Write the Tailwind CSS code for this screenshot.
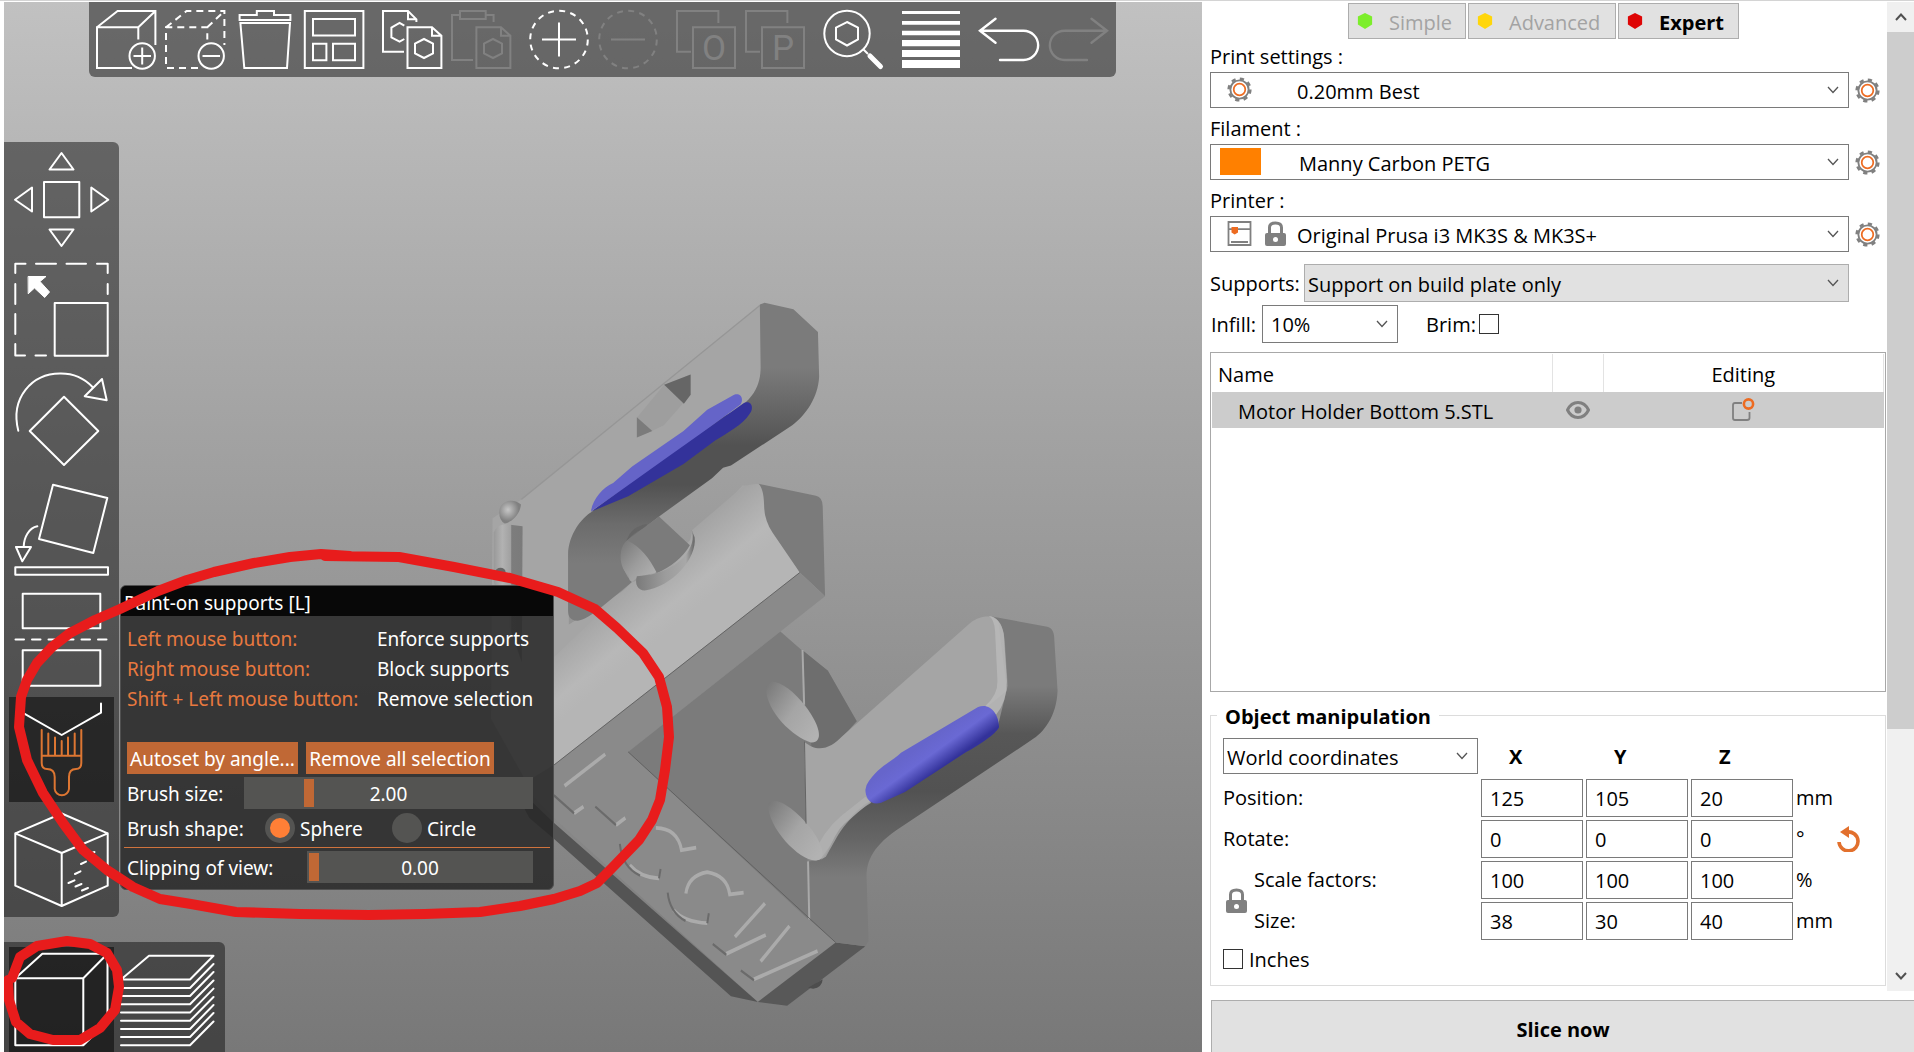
<!DOCTYPE html>
<html lang="en">
<head>
<meta charset="utf-8">
<title>PrusaSlicer</title>
<script src="https://cdn.jsdelivr.net/npm/@tailwindcss/browser@4"></script>
</head>
<body class="bg-white text-black">
<div class="flex h-screen flex-col overflow-hidden border-t border-[#d4d4d4] bg-white pt-px font-['Open_Sans','Noto_Sans',sans-serif] text-[20px] leading-7">
<div class="flex min-h-0 flex-1">

<main class="relative ml-[3px] min-w-0 flex-1 overflow-hidden border-l border-white bg-linear-to-b from-[#c1c1c1] to-[#787878] font-['Noto_Sans',sans-serif] text-white">

  <!-- 3D scene -->
  <svg class="absolute inset-0 h-full w-full" viewBox="4 2 1198 1050" preserveAspectRatio="xMinYMin slice" aria-label="Motor Holder Bottom model">
    <defs>
      <linearGradient id="armA" gradientUnits="userSpaceOnUse" x1="0" y1="185" x2="0" y2="600"><stop offset="0" stop-color="#7b7b7b"/><stop offset=".28" stop-color="#5f5f5f"/><stop offset=".4" stop-color="#525252"/><stop offset=".6" stop-color="#525252"/><stop offset=".8" stop-color="#6c6c6c"/><stop offset="1" stop-color="#7b7b7b"/></linearGradient>
      <linearGradient id="armB" gradientUnits="userSpaceOnUse" x1="0" y1="860" x2="0" y2="1265"><stop offset="0" stop-color="#7b7b7b"/><stop offset=".25" stop-color="#575757"/><stop offset=".55" stop-color="#525252"/><stop offset=".8" stop-color="#656565"/><stop offset="1" stop-color="#7b7b7b"/></linearGradient>
      <linearGradient id="block" gradientUnits="userSpaceOnUse" x1="420" y1="630" x2="500" y2="745"><stop offset="0" stop-color="#a4a4a4"/><stop offset=".7" stop-color="#b8b8b8"/><stop offset="1" stop-color="#b5b5b5"/></linearGradient>
      <linearGradient id="hole" x1="0" y1="0" x2="1" y2=".8"><stop offset="0" stop-color="#777"/><stop offset=".55" stop-color="#a5a5a5"/><stop offset="1" stop-color="#b2b2b2"/></linearGradient>
      <linearGradient id="hole2" x1="0" y1="0" x2="1" y2="1"><stop offset="0" stop-color="#777"/><stop offset=".5" stop-color="#9c9c9c"/><stop offset="1" stop-color="#b6b6b6"/></linearGradient>
      <linearGradient id="lip" x1="0" y1="0" x2="1" y2="0"><stop offset="0" stop-color="#7a7a7a"/><stop offset=".5" stop-color="#9c9c9c"/><stop offset=".85" stop-color="#a8a8a8"/><stop offset="1" stop-color="#666"/></linearGradient>
      <linearGradient id="paint" gradientUnits="userSpaceOnUse" x1="1150" y1="980" x2="1185" y2="1038"><stop offset="0" stop-color="#6665cb"/><stop offset=".45" stop-color="#6a69d4"/><stop offset="1" stop-color="#33329a"/></linearGradient>
      <linearGradient id="tube"><stop offset="0" stop-color="#999"/><stop offset=".3" stop-color="#b2b2b2"/><stop offset=".6" stop-color="#a0a0a0"/><stop offset=".62" stop-color="#7d7d7d"/><stop offset="1" stop-color="#7b7b7b"/></linearGradient>
      <radialGradient id="ball" cx=".4" cy=".4"><stop offset="0" stop-color="#c6c6c6"/><stop offset="1" stop-color="#808080"/></radialGradient>
    </defs>
    <g transform="translate(470 280) scale(.3954 .4719)">
      <path fill="#a5a5a5" d="M733 52 L740 190 L690 265 L310 492 L250 600 L250 730 L500 600 L690 435 L743 440 L834 620 L212 1028 L160 1090 L53 930 L57 505 L130 465Z"/>
      <path stroke="#969696" stroke-width="3" fill="none" d="M130 465 L733 54"/>
      <path fill="url(#armA)" d="M733 52 L745 48 L818 62 L880 110 L883 205 C880 250 850 285 815 308 L660 393 L640 398 L612 420 L480 500 L400 552 C378 568 376 610 410 640 L330 695 C300 715 280 722 272 722 C252 722 248 712 248 700 L248 580 C250 540 280 505 310 490 L640 290 C720 260 735 220 735 185Z"/>
      <path fill="url(#block)" d="M562 530 L690 438 Q715 430 735 433 L743 450 L745 495 L834 620 L212 1028 L212 800 L410 640 L500 620 L555 562Z"/>
      <path fill="#666" d="M396 552 Q408 522 447 517 L447 524 Q420 530 398 552Z"/>
      <path fill="#7b7b7b" d="M396 552 L478 501 L556 562 Q530 600 470 622 L440 590Z"/>
      <path fill="url(#hole2)" d="M398 552 C374 565 376 610 400 624 L404 636 L410 640 L425 629 L472 620 C455 590 430 565 398 552Z"/>
      <path fill="url(#lip)" d="M560 528 C568 545 562 568 540 588 C510 612 475 625 422 628 C416 645 424 658 442 658 C510 650 575 590 568 545Z"/>
      <path fill="#7b7b7b" d="M730 432 L875 457 Q892 460 892 480 L898 670 L834 620 L765 535 Q745 510 744 480 C743 450 738 440 730 432Z"/>
      <path fill="#8a8a8a" d="M834 620 L898 670 L785 745 L400 1000 L925 1404 L728 1530 L212 1140 L130 1070 L212 1028Z"/>
      <path fill="#545454" d="M100 1060 L212 1150 L728 1530 L660 1518 L212 1184 L150 1140Z"/>
      <path fill="#7b7b7b" d="M785 745 L840 785 L905 828 L978 935 L925 975 L845 1000 L858 1357 L400 1000Z"/>
      <path fill="#6e6e6e" d="M842 785 L905 828 L978 935 L925 985 Q890 1000 865 995 L848 900Z"/>
      <path fill="#585858" d="M925 1404 L1000 1412 L802 1538 L728 1530Z"/>
      <path fill="#4d4d4d" d="M855 1500 L892 1482 Q890 1500 868 1502Z"/>
      <path fill="#a5a5a5" d="M845 978 C880 1005 915 990 940 968 L1265 727 C1290 710 1315 712 1335 716 L1358 870 L1300 910 L1010 1105 C940 1140 900 1225 880 1230 L850 1150Z"/>
      <path fill="url(#armB)" d="M1320 713 L1460 735 C1475 738 1478 750 1478 765 L1486 870 C1484 925 1450 960 1420 975 L1080 1165 C1010 1205 1003 1240 1003 1265 L1008 1400 L1000 1412 L925 1404 L858 1355 L856 1232 L890 1228 C915 1205 920 1165 960 1143 L1010 1108 L1335 945 L1360 860 L1352 760 Q1345 720 1320 713Z"/>
      <path fill="#bababa" d="M1312 712 Q1342 715 1350 750 L1358 850 Q1358 895 1330 922 L1303 903 Q1335 880 1334 850 L1328 745 Q1326 718 1312 712Z" opacity=".8"/>
      <path fill="#b4b4b4" opacity=".7" d="M1000 1095 L1015 1108 C940 1145 925 1190 900 1222 Q885 1232 868 1222 Q890 1170 940 1135Z"/>
      <path fill="url(#hole)" d="M749 862 C756 838 805 855 850 905 C890 950 892 982 862 980 C820 970 746 915 749 862Z"/>
      <path fill="url(#hole)" d="M754 1110 C768 1090 820 1118 860 1160 C895 1198 900 1226 880 1229 C845 1240 752 1165 754 1110Z"/>
      <path fill="none" stroke="#a9a9a9" stroke-width="5" d="M841 784 L845 900 M855 1232 L858 1355"/>
      <path fill="none" stroke="#5c5c5c" stroke-width="2" d="M846 978 L850 1152 M400 1000 L925 1404 M212 1028 L834 620"/>
      <path fill="#9e9e9e" d="M422 292 L491 222 L558 200 L558 243 L490 308 L460 320 L422 333Z"/>
      <path fill="#666" d="M491 222 L558 200 L558 243 L541 262Z"/>
      <path fill="#7b7b7b" d="M422 291 L461 320 L422 334Z"/>
      <path fill="#6564c8" d="M306 490 C310 465 335 440 362 430 L410 395 L540 320 L600 275 L668 243 C688 238 692 255 684 264 L500 380Z"/>
      <path fill="#33329a" d="M306 491 L500 375 L690 262 C712 252 720 272 706 285 C692 305 650 325 620 340 L540 390 L400 458Z"/>
      <path fill="url(#paint)" d="M1003 1070 C1030 1030 1070 1020 1090 1002 L1285 905 C1315 895 1338 920 1338 948 C1330 962 1290 985 1250 1003 L1100 1085 L1040 1108 C1010 1115 1000 1095 1000 1080Z"/>
      <path fill="url(#tube)" d="M60 535 Q70 516 95 518 L133 522 L131 810 L60 640Z"/>
      <ellipse cx="77" cy="618" rx="13" ry="8" fill="#666"/>
      <path fill="url(#ball)" d="M74 492 C74 468 110 460 129 476 C126 500 100 515 88 516 Q74 510 74 492Z"/>
      <g fill="none" stroke-width="8">
        <path stroke="#ababab" d="M239 1072 L342 1005 M263 1130 L287 1116 M369 1155 L393 1140 M470 1161 Q525 1162 535 1208 L572 1203 M478 1268 Q430 1266 404 1240 M546 1300 Q552 1262 600 1255 Q650 1262 657 1302 L692 1298 M670 1392 L746 1321 M648 1428 L748 1388 M735 1444 L808 1369 M718 1482 L879 1422 M600 1363 Q540 1360 515 1335"/>
        <path stroke="#6b6b6b" stroke-width="5" d="M212 1092 L263 1130 M317 1116 L369 1155 M379 1195 Q385 1245 430 1262 M500 1298 Q505 1340 545 1358 M600 1363 L604 1342 M478 1268 L482 1248 M614 1407 L648 1430 M685 1463 L718 1484"/>
      </g>
    </g>
  </svg>

  <!-- top toolbar -->
  <nav aria-label="Main toolbar" class="absolute top-0 left-[85px] flex h-[75px] gap-[9px] rounded-b-md bg-[#141414]/51 px-2 pt-2">
    <button aria-label="Add" class="size-[60px]"><svg class="size-full overflow-visible" viewBox="98 10 60 60" fill="none" stroke="#fff" stroke-width="2"><path d="M133 68H98V27.3H139.3V39.5M98 27.3L118.6 11H156.4V45M139.3 27.3L156.4 11"/><circle cx="143.2" cy="56" r="12.7"/><path d="M134.5 56H152M143.2 47.5V64.5"/></svg></button>
    <button aria-label="Delete" class="size-[60px]"><svg class="size-full overflow-visible" viewBox="98 10 60 60" fill="none" stroke="#fff" stroke-width="2"><path stroke-dasharray="7 5" d="M130 68H98V27.3H139.3V39.5M98 27.3L118.6 11H156.4V45M139.3 27.3L156.4 11"/><circle cx="143.2" cy="56" r="12.7"/><path d="M134.5 56H152"/></svg></button>
    <button aria-label="Delete all" class="size-[60px]"><svg class="size-full overflow-visible" viewBox="235 10 60 60" fill="none" stroke="#fff" stroke-width="2"><path d="M239.6 20V15H256.8V11H274V15H290.4V20ZM240.4 23H290L287 68H244.3Z"/></svg></button>
    <button aria-label="Arrange" class="size-[60px]"><svg class="size-full overflow-visible" viewBox="304 10 60 60" fill="none" stroke="#fff" stroke-width="2"><path d="M304.8 11H363.4V68H304.8ZM313 19H355V35.5H313ZM313 43.7H326.4V60.3H313ZM333 43.7H355V60.3H333Z"/></svg></button>
    <button aria-label="Copy" class="ml-[9px] size-[60px]"><svg class="size-full overflow-visible" viewBox="382 10 60 60" fill="none" stroke="#fff" stroke-width="2"><path d="M404 51.7H383V11H408L416.4 19.3V22M408 11V19.3H416.4M404.3 25.7L399.6 23L391.4 27.7V37.3L399.6 41.7L404.3 39M407.5 27.3H432L441.4 35.7V68H407.5ZM432 27.3V35.7H441.4M424 39L433 43.7V53.3L424 58L415 53.3V43.7Z"/></svg></button>
    <button aria-label="Paste" disabled class="size-[60px]"><svg class="size-full overflow-visible" viewBox="451 10 60 60" fill="none" stroke="#818181" stroke-width="2"><path d="M460 15H452V60H473M485.7 15H493.6V22M460 11H485.7V19H460ZM476.4 27.3H501L510.4 35.7V68H476.4ZM501 27.3V35.7H510.4M493 39L502 43.7V53.3L493 58L484 53.3V43.7Z"/></svg></button>
    <button aria-label="Add instance" class="ml-[9px] size-[60px]"><svg class="size-full overflow-visible" viewBox="529 10 60 60" fill="none" stroke="#fff" stroke-width="2"><circle cx="559" cy="39.5" r="28.8" stroke-dasharray="6 5.31"/><path d="M542 39.5H576M559 22.5V56.5"/></svg></button>
    <button aria-label="Remove instance" disabled class="size-[60px]"><svg class="size-full overflow-visible" viewBox="598 10 60 60" fill="none" stroke="#818181" stroke-width="2"><circle cx="628" cy="39.5" r="28.8" stroke-dasharray="6 5.31"/><path d="M611 39.5H645"/></svg></button>
    <button aria-label="Split to objects" disabled class="ml-[9px] size-[60px]"><svg class="size-full overflow-visible" viewBox="676 10 60 60" fill="none" stroke="#818181" stroke-width="2"><path d="M691 51.7H677V11H718.4V23M693 27.3H735V68H693Z"/><text x="714" y="60" text-anchor="middle" fill="#818181" stroke="none" class="font-[Roboto,sans-serif] text-[35px]">O</text></svg></button>
    <button aria-label="Split to parts" disabled class="size-[60px]"><svg class="size-full overflow-visible" viewBox="676 10 60 60" fill="none" stroke="#818181" stroke-width="2"><path d="M691 51.7H677V11H718.4V23M693 27.3H735V68H693Z"/><text x="714" y="60" text-anchor="middle" fill="#818181" stroke="none" class="font-[Roboto,sans-serif] text-[35px]">P</text></svg></button>
    <button aria-label="Search" class="ml-[9px] size-[60px]"><svg class="size-full overflow-visible" viewBox="823 10 60 60" fill="none" stroke="#fff" stroke-width="2"><circle cx="847" cy="33.5" r="22.7"/><path d="M847 22L858 27.5V39.5L847 45.5L836 39.5V27.5Z"/><path d="M863 49L868 54"/><path stroke-width="5" stroke-linecap="round" d="M870 56L880.5 66.5"/></svg></button>
    <button aria-label="Variable layer height" class="ml-[9px] size-[60px]"><svg class="size-full overflow-visible" viewBox="901 10 60 60" fill="#fff"><path d="M902 11H960V14H902ZM902 21H960V24.7H902ZM902 30.7H960V35.3H902ZM902 40H960V46.3H902ZM902 50H960V57H902ZM902 60H960V68H902Z"/></svg></button>
    <button aria-label="Undo" class="ml-[9px] size-[60px]"><svg class="size-full overflow-visible" viewBox="980 10 60 60" fill="none" stroke="#fff" stroke-width="2.4" stroke-linecap="round"><path d="M996.5 18.7L981 30.7L996.5 42.7M981 30.7H1024.5A14.6 14.6 0 0 1 1024.5 60H1001"/></svg></button>
    <button aria-label="Redo" disabled class="size-[60px]"><svg class="size-full overflow-visible" viewBox="1049 10 60 60" fill="none" stroke="#818181" stroke-width="2.4" stroke-linecap="round"><path d="M1092.5 18.7L1108 30.7L1092.5 42.7M1108 30.7H1065.5A14.6 14.6 0 0 0 1065.5 60H1088"/></svg></button>
  </nav>

  <!-- gizmo toolbar -->
  <nav aria-label="Tools" class="absolute top-[140px] left-0 flex flex-col gap-[5px] rounded-r-md bg-[#141414]/51 p-[5px]">
    <button aria-label="Move" class="size-[105px]"><svg class="size-full" viewBox="9 147 105 105" fill="none" stroke="#fff" stroke-width="2" stroke-linejoin="round"><path d="M44 182H79.3V217.3H44ZM61.5 153L73.5 169.5H49.5ZM49.5 229.5H73.5L61.5 246ZM15 199.7L32 187.5V211.5ZM108.3 199.7L91.3 187.5V211.5Z"/></svg></button>
    <button aria-label="Scale" class="size-[105px]"><svg class="size-full" viewBox="9 257 105 105" fill="none" stroke="#fff" stroke-width="2" stroke-linecap="round" stroke-linejoin="round"><path d="M15.3 273V263.7H25.5M36 263.7H56M66.5 263.7H86M97 263.7H107.7V273M107.7 284V294M15.3 284V304M15.3 314V334M15.3 344V355.5H25M35.5 355.5H46M54.7 303H107.7V355.7H54.7Z"/><path fill="#fff" stroke-width="1" d="M28.5 276.5H46L40 281.5L49.5 292L44.7 297.5L34.5 288L28.5 293.5Z"/></svg></button>
    <button aria-label="Rotate" class="size-[105px]"><svg class="size-full" viewBox="9 367 105 105" fill="none" stroke="#fff" stroke-width="2" stroke-linecap="round" stroke-linejoin="round"><path d="M64 396.7L98.3 431L64 465L29.7 431ZM18.3 430.7C10 398 32 373 61 373.5C73 373.5 84 378 92.5 387M102 379L106.7 400.3L84.7 396.3Z"/></svg></button>
    <button aria-label="Place on face" class="size-[105px]"><svg class="size-full" viewBox="9 477 105 105" fill="none" stroke="#fff" stroke-width="2" stroke-linecap="round" stroke-linejoin="round"><path d="M53 484.7L107.3 498L93.3 553L39 539ZM37.3 526.3C29 528 24 537 23.7 546.7M16 547H31L22.3 561.3ZM15.3 567.3H108V574.7H15.3Z"/></svg></button>
    <button aria-label="Cut" class="size-[105px]"><svg class="size-full" viewBox="9 587 105 105" fill="none" stroke="#fff" stroke-width="2" stroke-linecap="round" stroke-linejoin="round"><path d="M22.7 593.7H100.3V628.3H22.7ZM22.7 650.3H100.3V685.7H22.7Z"/><path stroke-dasharray="8.5 8" d="M15.5 639.4H107"/></svg></button>
    <button aria-label="Paint-on supports" class="size-[105px] bg-black/50"><svg class="size-full" viewBox="9 697 105 105" fill="none" stroke="#fff" stroke-width="2" stroke-linecap="round" stroke-linejoin="round"><path d="M101 703.5V712.7L61.7 735L22.5 712.7V703.5"/><path stroke="#dd7632" d="M41.7 730V763Q41.7 769 47 769Q54.7 769 54.7 777V789A7.2 7.2 0 0 0 69 789V777Q69 769 76 769Q81.3 769 81.3 763V730M41.7 755.7H81.3M48.3 733.5V755M55 737.5V755M61.7 741V755M68 737.5V755M74.7 733.5V755"/></svg></button>
    <button aria-label="Seam painting" class="size-[105px]"><svg class="size-full" viewBox="9 807 105 105" fill="none" stroke="#fff" stroke-width="2" stroke-linecap="round" stroke-linejoin="round"><path d="M61.7 813.5L107.7 833.3V885.7L61.7 906L15.3 885.7V833.3ZM15.3 833.3L61.7 853L107.7 833.3M61.7 853V906M68.5 883L74.5 880.3M75 874L80.5 871.3M81 864L86 861.6M75.5 886.5L81.5 884M82 890.5L88 888M89 854L94.5 852"/></svg></button>
  </nav>

  <!-- view switch -->
  <nav aria-label="View" class="absolute bottom-0 left-0 flex gap-[5px] rounded-tr-md bg-[#141414]/51 pt-[5px] pr-px pl-[5px]">
    <button aria-label="3D editor view" class="size-[105px] bg-black/50"><svg class="size-full" viewBox="9 947 105 105" fill="none" stroke="#fff" stroke-width="2" stroke-linejoin="round"><path d="M15.3 978.3H83.3V1045.3H15.3ZM15.3 978.3L42.3 953.7H107.5V1021.7L83.3 1045.3M83.3 978.3L107.5 953.7"/></svg></button>
    <button aria-label="Preview" class="size-[105px]"><svg class="size-full overflow-visible" viewBox="119 947 105 105" fill="none" stroke="#fff" stroke-width="2" stroke-linecap="round" stroke-linejoin="round"><path d="M121 979.5L149 955.7H213.5L190 979.5ZM121 988H190L213.5 964M121 996H190L213.5 972M121 1004.3H190L213.5 980.5M121 1012.6H190L213.5 988.6M121 1020.8H190L213.5 997M121 1029H190L213.5 1005M121 1037H190L213.5 1013M121 1045.3H190L213.5 1021.5"/></svg></button>
  </nav>

  <!-- paint-on supports panel -->
  <section class="absolute top-[583px] left-[116px] w-[434px] overflow-hidden rounded-md border border-[#505050] bg-[#272727]/85 pb-[6px] text-[19px]">
    <h2 class="h-[30px] bg-[#080808] pl-[3px] leading-[34px]">Paint-on supports [L]</h2>
    <div class="px-[6px] pt-2">
      <dl class="grid grid-cols-[250px_1fr] leading-[30px]">
        <dt class="text-[#e8793f]">Left mouse button:</dt><dd>Enforce supports</dd>
        <dt class="text-[#e8793f]">Right mouse button:</dt><dd>Block supports</dd>
        <dt class="text-[#e8793f]">Shift + Left mouse button:</dt><dd>Remove selection</dd>
      </dl>
      <div class="mt-7 flex gap-2">
        <button class="h-8 w-[171px] bg-[#c06835] pt-[2px] whitespace-nowrap">Autoset by angle...</button>
        <button class="h-8 w-[188px] bg-[#c06835] pt-[2px] whitespace-nowrap">Remove all selection</button>
      </div>
      <div class="mt-[3px] flex h-8 items-center">
        <label for="brush" class="w-[117px] pt-[2px]">Brush size:</label>
        <div class="relative h-8 w-[289px]">
          <input id="brush" type="range" min="0.4" max="8" step="0.1" value="2" class="block h-8 w-full appearance-none bg-[#545452] px-[2px] [&::-webkit-slider-thumb]:h-7 [&::-webkit-slider-thumb]:w-[10px] [&::-webkit-slider-thumb]:appearance-none [&::-webkit-slider-thumb]:bg-[#c06835]">
          <span class="pointer-events-none absolute inset-0 text-center leading-[34px]">2.00</span>
        </div>
      </div>
      <div class="flex h-[38px] items-center">
        <span class="w-[138px] pt-[2px]">Brush shape:</span>
        <label class="flex w-[127px] items-center gap-[5px]"><input type="radio" name="shape" checked class="size-[30px] appearance-none rounded-full bg-[#545452] checked:border-[5px] checked:border-[#545452] checked:bg-[#ff7f36]"><span class="pt-[2px]">Sphere</span></label>
        <label class="flex items-center gap-[5px]"><input type="radio" name="shape" class="size-[30px] appearance-none rounded-full bg-[#545452] checked:border-[5px] checked:border-[#545452] checked:bg-[#ff7f36]"><span class="pt-[2px]">Circle</span></label>
      </div>
      <hr class="-mx-[3px] border-[#d0733d]">
      <div class="mt-[3px] flex h-8 items-center">
        <label for="clip" class="w-[180px] pt-[2px]">Clipping of view:</label>
        <div class="relative h-8 w-[226px]">
          <input id="clip" type="range" min="0" max="1" step="0.01" value="0" class="block h-8 w-full appearance-none bg-[#545452] px-[2px] [&::-webkit-slider-thumb]:h-7 [&::-webkit-slider-thumb]:w-[10px] [&::-webkit-slider-thumb]:appearance-none [&::-webkit-slider-thumb]:bg-[#c06835]">
          <span class="pointer-events-none absolute inset-0 text-center leading-[34px]">0.00</span>
        </div>
      </div>
    </div>
  </section>

  <!-- hand-drawn marks -->
  <svg class="pointer-events-none absolute inset-0 h-full w-full" viewBox="4 2 1198 1050" preserveAspectRatio="xMinYMin slice" fill="none" stroke="#e81c1c" stroke-width="10" stroke-linejoin="round" stroke-linecap="round" aria-hidden="true">
    <path d="M350 556L321 554L290 557L254 563L214 572L187 580L158 591L120 609L95 620L70 633L52 647L37 663L27 680L21 697L19 727L27 760L43 793L63 823L83 850L107 870L133 887L160 899L191 904L236 912L300 914L369 915L425 914L480 912L520 906L554 899L580 891L597 883L612 868L639 840L652 820L660 800L665 770L669 737L667 707L659 677L643 653L617 628L595 609L558 592L510 578L454 567L399 557L325 556"/>
    <path d="M12 978L20 957L37 946L67 941L90 944L107 953L117 970L119 987L115 1010L100 1028L80 1040L53 1040L30 1034L16 1022L9 1000L8 980"/>
  </svg>
</main>

<!-- settings panel -->
<aside class="flex w-[712px] shrink-0 flex-col pl-2">
  <div class="flex min-h-0 flex-1">
    <div class="flex min-w-0 flex-1 flex-col pr-px">
      <div class="flex h-[37px] justify-center gap-[2px] pt-px pr-[9px]">
        <button class="flex w-[118px] items-center gap-4 border border-[#adadad] bg-[#e1e1e1] pt-[3px] pl-2 text-[#a3a3a3]"><svg class="size-4 -translate-y-0.5" viewBox="0 0 16 18"><path fill="#7cee2b" d="M8 0L16 4V13L8 18L0 13V4Z"/></svg>Simple</button>
        <button class="flex w-[148px] items-center gap-4 border border-[#adadad] bg-[#e1e1e1] pt-[3px] pl-2 text-[#a3a3a3]"><svg class="size-4 -translate-y-0.5" viewBox="0 0 16 18"><path fill="#ffd60a" d="M8 0L16 4V13L8 18L0 13V4Z"/></svg>Advanced</button>
        <button class="flex w-[121px] items-center gap-4 border border-[#adadad] bg-[#e1e1e1] pt-[3px] pl-2 font-bold"><svg class="size-4 -translate-y-0.5" viewBox="0 0 16 18"><path fill="#de0505" d="M8 0L16 4V13L8 18L0 13V4Z"/></svg>Expert</button>
      </div>
      <label for="print" class="flex h-[33px] items-end pb-px">Print settings :</label>
      <div class="flex items-center gap-[6px]">
        <div class="relative w-[639px]">
          <select id="print" class="h-9 w-full appearance-none border border-[#7a7a7a] bg-white pt-[3px] pl-[86px]"><option>0.20mm Best</option></select>
          <svg class="pointer-events-none absolute top-[5px] left-[17px] size-[25px]" viewBox="0 0 26 26" fill="none"><circle cx="13" cy="13" r="9.5" stroke="#808080" stroke-width="2"/><circle cx="13" cy="13" r="11.3" stroke="#808080" stroke-width="2.6" stroke-dasharray="4.4 4.475"/><circle cx="13" cy="13" r="6" stroke="#ed6b21" stroke-width="1.8"/></svg>
          <svg class="pointer-events-none absolute top-[14px] right-[10px] h-2 w-3" viewBox="0 0 12 8" fill="none" stroke="#555" stroke-width="1.3"><path d="M1 1L6 6.5L11 1"/></svg>
        </div>
        <button aria-label="Edit print settings"><svg class="size-[25px]" viewBox="0 0 26 26" fill="none"><circle cx="13" cy="13" r="9.5" stroke="#808080" stroke-width="2"/><circle cx="13" cy="13" r="11.3" stroke="#808080" stroke-width="2.6" stroke-dasharray="4.4 4.475"/><circle cx="13" cy="13" r="6" stroke="#ed6b21" stroke-width="1.8"/></svg></button>
      </div>
      <label for="filament" class="flex h-9 items-end pb-px">Filament :</label>
      <div class="flex items-center gap-[6px]">
        <div class="relative w-[639px]">
          <select id="filament" class="h-9 w-full appearance-none border border-[#7a7a7a] bg-white pt-[3px] pl-[88px]"><option>Manny Carbon PETG</option></select>
          <span class="pointer-events-none absolute top-1 left-[10px] h-[27px] w-[41px] bg-[#ff8000]"></span>
          <svg class="pointer-events-none absolute top-[14px] right-[10px] h-2 w-3" viewBox="0 0 12 8" fill="none" stroke="#555" stroke-width="1.3"><path d="M1 1L6 6.5L11 1"/></svg>
        </div>
        <button aria-label="Edit filament"><svg class="size-[25px]" viewBox="0 0 26 26" fill="none"><circle cx="13" cy="13" r="9.5" stroke="#808080" stroke-width="2"/><circle cx="13" cy="13" r="11.3" stroke="#808080" stroke-width="2.6" stroke-dasharray="4.4 4.475"/><circle cx="13" cy="13" r="6" stroke="#ed6b21" stroke-width="1.8"/></svg></button>
      </div>
      <label for="printer" class="flex h-9 items-end pb-px">Printer :</label>
      <div class="flex items-center gap-[6px]">
        <div class="relative w-[639px]">
          <select id="printer" class="h-9 w-full appearance-none border border-[#7a7a7a] bg-white pt-[3px] pl-[86px]"><option>Original Prusa i3 MK3S &amp; MK3S+</option></select>
          <svg class="pointer-events-none absolute top-[5px] left-[17px] h-[25px] w-[25px]" viewBox="0 0 25 25" fill="none" stroke="#808080" stroke-width="1.8"><path d="M1.5 1V24H23.5V1ZM1 1.2H24M1 8.2H24M4 21H21"/><path fill="#ed6b21" stroke="none" d="M4.500 6H11V11.500L7.700 13.500L4.500 11.500Z"/></svg>
          <svg class="pointer-events-none absolute top-[5px] left-[55px] h-[25px] w-[21px]" viewBox="0 0 21 25"><path fill="none" stroke="#808080" stroke-width="3" d="M4.500 13V6.500Q4.500 2 10.500 2Q16.500 2 16.500 6.500V13"/><rect y="12" width="21" height="13" rx="2" fill="#808080"/><circle cx="10.500" cy="18.500" r="2.500" fill="#fff"/></svg>
          <svg class="pointer-events-none absolute top-[14px] right-[10px] h-2 w-3" viewBox="0 0 12 8" fill="none" stroke="#555" stroke-width="1.3"><path d="M1 1L6 6.5L11 1"/></svg>
        </div>
        <button aria-label="Edit printer"><svg class="size-[25px]" viewBox="0 0 26 26" fill="none"><circle cx="13" cy="13" r="9.5" stroke="#808080" stroke-width="2"/><circle cx="13" cy="13" r="11.3" stroke="#808080" stroke-width="2.6" stroke-dasharray="4.4 4.475"/><circle cx="13" cy="13" r="6" stroke="#ed6b21" stroke-width="1.8"/></svg></button>
      </div>
      <div class="mt-3 flex w-[639px] items-center">
        <label for="supports" class="w-[94px] pt-[2px]">Supports:</label>
        <div class="relative flex-1">
          <select id="supports" class="h-[38px] w-full appearance-none border border-[#adadad] bg-[#e1e1e1] pt-[3px] pl-[3px]"><option>Support on build plate only</option></select>
          <svg class="pointer-events-none absolute top-[15px] right-[10px] h-2 w-3" viewBox="0 0 12 8" fill="none" stroke="#555" stroke-width="1.3"><path d="M1 1L6 6.5L11 1"/></svg>
        </div>
      </div>
      <div class="mt-[3px] flex items-center">
        <label for="infill" class="w-[52px] pt-[2px] pl-px">Infill:</label>
        <div class="relative w-[136px]">
          <select id="infill" class="h-[38px] w-full appearance-none border border-[#7a7a7a] bg-white pt-[2px] pl-2"><option>10%</option></select>
          <svg class="pointer-events-none absolute top-[15px] right-[10px] h-2 w-3" viewBox="0 0 12 8" fill="none" stroke="#555" stroke-width="1.3"><path d="M1 1L6 6.5L11 1"/></svg>
        </div>
        <label for="brim" class="ml-7 w-[53px] pt-[2px]">Brim:</label>
        <input id="brim" type="checkbox" class="size-5 appearance-none border border-[#333] bg-white checked:bg-[#333]">
      </div>
      <div class="mt-[9px] h-[340px] border border-[#a8a8a8] p-px">
        <table class="w-full table-fixed border-collapse">
          <colgroup><col class="w-[340px]"><col class="w-[51px]"><col></colgroup>
          <thead><tr class="h-[38px]"><th class="border-r border-[#e3e3e3] pt-1 pl-[6px] text-left font-normal">Name</th><th class="border-r border-[#e3e3e3]"></th><th class="border-r border-[#e3e3e3] pt-1 font-normal">Editing</th></tr></thead>
          <tbody><tr class="h-9 bg-[#cccccc]"><td class="pt-[3px] pl-[26px]">Motor Holder Bottom 5.STL</td>
            <td><svg class="mx-auto h-[18px] w-6" viewBox="0 0 24 18" fill="none" stroke="#808080" stroke-width="3"><path d="M1.500 9Q5 1.500 12 1.500T22.500 9Q19 16.500 12 16.500T1.500 9Z"/><circle cx="12" cy="9" r="3.600" fill="#808080" stroke="none"/></svg></td>
            <td><svg class="mx-auto size-6" viewBox="0 0 24 24" fill="none" stroke="#808080" stroke-width="1.800"><path d="M11 5H4Q2 5 2 7V20Q2 22 4 22H16Q18.500 22 18.500 20V14"/><circle cx="17.500" cy="6" r="4.600" stroke="#ed6b21" stroke-width="2.600"/></svg></td></tr></tbody>
        </table>
      </div>
      <fieldset class="mt-[7px] border border-[#dcdcdc] px-3 pt-[7px] pb-[11px]">
        <legend class="-ml-[6px] px-2 pt-1 font-bold">Object manipulation</legend>
        <div class="grid grid-cols-[255px_102px_102px_102px_1fr] gap-[3px]">
          <div class="relative h-[38px]">
            <select aria-label="Coordinates" class="h-9 w-full appearance-none border border-[#7a7a7a] bg-white pt-[3px] pl-[3px]"><option>World coordinates</option></select>
            <svg class="pointer-events-none absolute top-[14px] right-[10px] h-2 w-3" viewBox="0 0 12 8" fill="none" stroke="#555" stroke-width="1.3"><path d="M1 1L6 6.5L11 1"/></svg>
          </div>
          <span class="pl-7 leading-[38px] font-bold">X</span><span class="pl-7 leading-[38px] font-bold">Y</span><span class="pl-7 leading-[38px] font-bold">Z</span><span></span>

          <span class="leading-[38px]">Position:</span>
          <input aria-label="Position X" value="125" class="h-[38px] w-full border border-[#7a7a7a] pl-2"><input aria-label="Position Y" value="105" class="h-[38px] w-full border border-[#7a7a7a] pl-2"><input aria-label="Position Z" value="20" class="h-[38px] w-full border border-[#7a7a7a] pl-2"><span class="leading-[38px]">mm</span>

          <span class="leading-[38px]">Rotate:</span>
          <input aria-label="Rotate X" value="0" class="h-[38px] w-full border border-[#7a7a7a] pl-2"><input aria-label="Rotate Y" value="0" class="h-[38px] w-full border border-[#7a7a7a] pl-2"><input aria-label="Rotate Z" value="0" class="h-[38px] w-full border border-[#7a7a7a] pl-2">
          <div class="flex items-center"><span class="w-[41px]">°</span><button aria-label="Reset rotation"><svg class="h-[26px] w-[23px]" viewBox="0 0 23 26"><path fill="none" stroke="#e2702d" stroke-width="3.600" d="M2 16A9.500 9.500 0 1 0 10 6"/><path fill="#e2702d" d="M3 6L12 0V12Z"/></svg></button></div>

          <div class="row-span-2 flex items-center">
            <svg class="ml-[3px] h-[25px] w-[21px]" viewBox="0 0 21 25"><path fill="none" stroke="#808080" stroke-width="3" d="M4.500 13V6.500Q4.500 2 10.500 2Q16.500 2 16.500 6.500V13"/><rect y="12" width="21" height="13" rx="2" fill="#808080"/><circle cx="10.500" cy="18.500" r="2.500" fill="#fff"/></svg>
            <div class="ml-[7px] grid gap-[3px] leading-[38px]"><span>Scale factors:</span><span>Size:</span></div>
          </div>
          <input aria-label="Scale X" value="100" class="h-[38px] w-full border border-[#7a7a7a] pl-2"><input aria-label="Scale Y" value="100" class="h-[38px] w-full border border-[#7a7a7a] pl-2"><input aria-label="Scale Z" value="100" class="h-[38px] w-full border border-[#7a7a7a] pl-2"><span class="leading-[38px]">%</span>
          <input aria-label="Size X" value="38" class="h-[38px] w-full border border-[#7a7a7a] pl-2"><input aria-label="Size Y" value="30" class="h-[38px] w-full border border-[#7a7a7a] pl-2"><input aria-label="Size Z" value="40" class="h-[38px] w-full border border-[#7a7a7a] pl-2"><span class="leading-[38px]">mm</span>
        </div>
        <label class="mt-1 flex items-center gap-[6px]"><input type="checkbox" class="size-5 appearance-none border border-[#333] bg-white checked:bg-[#333]"><span class="pt-[2px]">Inches</span></label>
      </fieldset>
    </div>
    <!-- scrollbar -->
    <div class="flex w-[27px] flex-col bg-[#f0f0f0]" aria-hidden="true">
      <div class="grid h-[30px] place-items-center"><svg class="h-2 w-3" viewBox="0 0 12 8" fill="none" stroke="#505050" stroke-width="2"><path d="M1 7L6 1.500L11 7"/></svg></div>
      <div class="h-[697px] bg-[#cdcdcd]"></div>
      <div class="grid flex-1 place-items-end justify-center pb-[11px]"><svg class="h-2 w-3" viewBox="0 0 12 8" fill="none" stroke="#505050" stroke-width="2"><path d="M1 1L6 6.500L11 1"/></svg></div>
    </div>
  </div>
  <button class="mt-[9px] ml-px h-[52px] shrink-0 border-t border-l border-[#adadad] bg-[#e1e1e1] pt-[6px] font-bold">Slice now</button>
</aside>
</div>
</div>
</body>
</html>
